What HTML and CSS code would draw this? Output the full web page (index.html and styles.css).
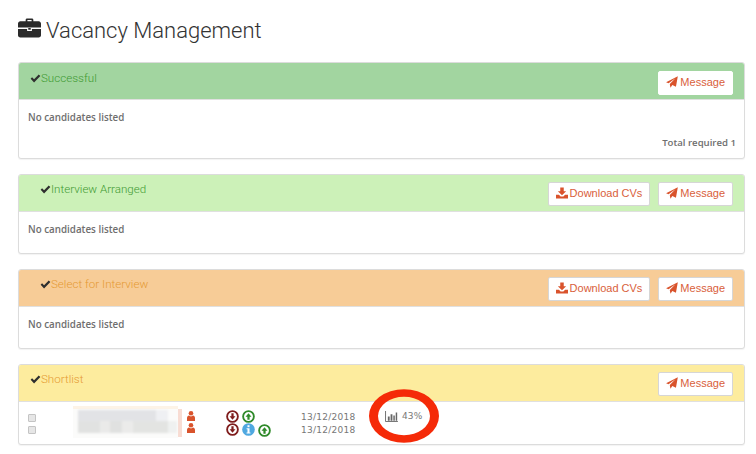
FILE: index.html
```html
<!DOCTYPE html>
<html lang="en">
<head>
<meta charset="utf-8">
<title>Vacancy Management</title>
<link rel="stylesheet" href="styles.css">
</head>
<body>
<svg class="defs" width="0" height="0" aria-hidden="true">
  <symbol id="check" viewBox="0 0 12 10"><path d="M0.6 5.2 2.2 3.6 4.4 5.8 9.6 0.6 11.4 2.2 4.4 9.4Z" fill="currentColor"/></symbol>
  <symbol id="plane" viewBox="0 0 14 14"><path d="M13.8 0.2 11.6 12.4 7.4 10.6 5.2 13.8 4.4 9.4 11 2.6 3 8.4 0.1 7.2Z" fill="currentColor"/></symbol>
  <symbol id="download" viewBox="0 0 13 12"><path d="M4.6 0H8.4V4H11L6.5 8.4 2 4H4.6ZM0 8H3.2L5 9.8H8L9.8 8H13V12H0Z" fill="currentColor"/></symbol>
  <symbol id="person" viewBox="0 0 8 10"><circle cx="4" cy="2.3" r="2.3" fill="currentColor"/><path d="M0 10V7C0 5.5 1 4.6 2 4.6L4 5.4 6 4.6C7 4.6 8 5.5 8 7V10Z" fill="currentColor"/></symbol>
  <symbol id="circle-down" viewBox="0 0 14 14"><circle cx="7" cy="7" r="5.8" fill="#fff" stroke="currentColor" stroke-width="2"/><path d="M5.8 3.4H8.2V6.8H10.2L7 10.6 3.8 6.8H5.8Z" fill="currentColor"/></symbol>
  <symbol id="circle-up" viewBox="0 0 14 14"><circle cx="7" cy="7" r="5.8" fill="#fff" stroke="currentColor" stroke-width="2"/><path d="M5.8 10.6H8.2V7.2H10.2L7 3.4 3.8 7.2H5.8Z" fill="currentColor"/></symbol>
  <symbol id="info" viewBox="0 0 14 14"><circle cx="7" cy="7" r="6.8" fill="currentColor"/><rect x="5.9" y="2.4" width="2.2" height="2.1" fill="#fff"/><path d="M4.9 5.6H8.1V10.2H9.1V11.4H4.9V10.2H5.9V6.8H4.9Z" fill="#fff"/></symbol>
  <symbol id="bars" viewBox="0 0 14 12"><path d="M0.5 0V11.5H14" fill="none" stroke="currentColor"/><path d="M3 6H5V10.5H3ZM6 3.5H8V10.5H6ZM9 5H10.6V10.5H9ZM11.6 1.5H13.2V10.5H11.6Z" fill="currentColor"/></symbol>
</svg>

<main class="page">
  <h1 class="title">
    <svg class="title-icon" viewBox="0 0 24 20" aria-hidden="true"><path d="M8 3V1.4C8 .6 8.6 0 9.4 0H14.6C15.4 0 16 .6 16 1.4V3H21.6C22.9 3 24 4.1 24 5.4V9.6H0V5.4C0 4.1 1.1 3 2.4 3ZM9.8 1.7V3H14.2V1.7ZM0 11H9.5V13H14.5V11H24V17.6C24 18.9 22.9 20 21.6 20H2.4C1.1 20 0 18.9 0 17.6ZM10.7 10H13.3V11.9H10.7Z" fill="currentColor"/></svg>
    Vacancy Management
  </h1>

  <section class="panel">
    <header class="panel-head head-green">
      <div class="head-label"><svg class="check"><use href="#check"/></svg><span class="label-green">Successful</span></div>
      <div class="actions">
        <a class="btn btn-flat"><svg class="btn-icon"><use href="#plane"/></svg>Message</a>
      </div>
    </header>
    <div class="panel-body body-total">
      <p class="empty">No candidates listed</p>
      <p class="total">Total required 1</p>
    </div>
  </section>

  <section class="panel">
    <header class="panel-head head-lime">
      <div class="head-label indent raised"><svg class="check"><use href="#check"/></svg><span class="label-green">Interview Arranged</span></div>
      <div class="actions">
        <a class="btn"><svg class="btn-icon"><use href="#download"/></svg>Download CVs</a>
        <a class="btn"><svg class="btn-icon"><use href="#plane"/></svg>Message</a>
      </div>
    </header>
    <div class="panel-body"><p class="empty">No candidates listed</p></div>
  </section>

  <section class="panel">
    <header class="panel-head head-orange">
      <div class="head-label indent raised"><svg class="check"><use href="#check"/></svg><span class="label-orange">Select for Interview</span></div>
      <div class="actions">
        <a class="btn"><svg class="btn-icon"><use href="#download"/></svg>Download CVs</a>
        <a class="btn"><svg class="btn-icon"><use href="#plane"/></svg>Message</a>
      </div>
    </header>
    <div class="panel-body"><p class="empty">No candidates listed</p></div>
  </section>

  <section class="panel">
    <header class="panel-head head-yellow">
      <div class="head-label raised"><svg class="check"><use href="#check"/></svg><span class="label-orange">Shortlist</span></div>
      <div class="actions">
        <a class="btn"><svg class="btn-icon"><use href="#plane"/></svg>Message</a>
      </div>
    </header>
    <div class="rows">
      <div class="col-checks"><span class="box"></span><span class="box"></span></div>
      <svg class="redacted" viewBox="0 0 110 32" aria-hidden="true">
        <defs><filter id="soft"><feGaussianBlur stdDeviation="0.8"/></filter></defs>
        <rect width="105" height="32" fill="#fbfbfa"/>
        <rect width="105" height="3" fill="#fdf3e6"/>
        <rect x="105" y="3" width="4" height="28" fill="#f8dcd3"/>
        <g filter="url(#soft)">
          <rect x="5" y="4" width="78" height="11" fill="#e2e3e6"/>
          <rect x="83" y="4" width="12" height="11" fill="#eff0f3"/>
          <rect x="5" y="15" width="22" height="12" fill="#e1e2e1"/>
          <rect x="27" y="15" width="10" height="12" fill="#eaeae9"/>
          <rect x="37" y="15" width="12" height="12" fill="#e0e1e0"/>
          <rect x="49" y="15" width="11" height="12" fill="#ebebea"/>
          <rect x="60" y="15" width="35" height="12" fill="#e3e4e2"/>
          <rect x="95" y="15" width="9" height="12" fill="#eff1f0"/>
        </g>
      </svg>
      <div class="col-people">
        <svg class="person"><use href="#person"/></svg>
        <svg class="person"><use href="#person"/></svg>
      </div>
      <div class="col-status">
        <div class="status-row">
          <svg class="status dark-red"><use href="#circle-down"/></svg>
          <svg class="status green"><use href="#circle-up"/></svg>
        </div>
        <div class="status-row">
          <svg class="status dark-red"><use href="#circle-down"/></svg>
          <svg class="status blue"><use href="#info"/></svg>
          <svg class="status green drop"><use href="#circle-up"/></svg>
        </div>
      </div>
      <div class="col-dates"><span>13/12/2018</span><span>13/12/2018</span></div>
      <div class="col-score"><svg class="bars"><use href="#bars"/></svg><span>43%</span></div>
    </div>
  </section>
</main>

<svg class="ring" viewBox="0 0 72 56" aria-hidden="true"><path fill-rule="evenodd" fill="#f52a08" d="M1 28a35 26.8 0 1 0 70 0a35 26.8 0 1 0 -70 0ZM10 28a26 19.2 0 1 0 52 0a26 19.2 0 1 0 -52 0Z"/></svg>
</body>
</html>
```

FILE: styles.css
```css
* { box-sizing: border-box; }
html, body { margin: 0; padding: 0; }
body {
  width: 756px;
  height: 454px;
  overflow: hidden;
  background: #fff;
  position: relative;
  font-family: "Open Sans", "Liberation Sans", sans-serif;
  color: #666;
}
.defs { position: absolute; }
.page { padding: 18px 11px 0 18px; }

.title {
  display: flex;
  align-items: center;
  gap: 5px;
  margin: 0 0 18px;
  height: 26px;
  padding-bottom: 2px;
  font-family: Roboto, "Liberation Sans", sans-serif;
  font-weight: 300;
  font-size: 22px;
  color: #333;
}
.title-icon { width: 23px; height: 20px; color: #2b2b2b; margin-bottom: 4px; }

.panel {
  border: 1px solid #dcdcdc;
  border-radius: 3px;
  margin-bottom: 15px;
  background: #fff;
  box-shadow: 0 1px 1px rgba(0,0,0,.05);
  overflow: hidden;
}
.panel-head {
  display: flex;
  justify-content: space-between;
  height: 37px;
  padding: 7px 11px 0 11px;
  border-bottom: 1px solid #e0e0e0;
}
.head-green { background: #a2d5a0; }
.head-lime { background: #ccf1b8; }
.head-orange { background: #f7cc97; }
.head-yellow { background: #fdec9e; }

.head-label {
  display: flex;
  align-items: flex-start;
  font-family: Roboto, "Liberation Sans", sans-serif;
  font-weight: 300;
  font-size: 11.6px;
  line-height: 16px;
  color: #2f2f2f;
}
.head-label.indent { padding-left: 10px; }
.head-label.raised { margin-top: -1px; }
.check { width: 11px; height: 9px; margin-top: 4px; color: #2f2f2f; }
.label-green { color: #3f9a32; }
.label-orange { color: #e59a33; }

.actions { display: flex; gap: 8px; align-items: flex-start; }
.btn {
  display: flex;
  align-items: center;
  gap: 2px;
  height: 24px;
  padding: 0 7px 2px;
  background: #fff;
  border: 1px solid #d6d6d6;
  border-radius: 2px;
  font-family: "Liberation Sans", sans-serif;
  font-size: 11px;
  color: #d9603b;
}
.btn-flat { border-color: #fff; margin-top: 1px; }
.btn-icon { width: 12px; height: 12px; color: #d9532c; }

.panel-body { padding: 11px 9px 0; height: 41px; }
.body-total { height: 58px; display: flex; flex-direction: column; }
.empty, .total {
  margin: 0;
  font-size: 9.8px;
  font-weight: 600;
  line-height: 14px;
  color: #6e6e6e;
}
.total { margin-top: 11px; text-align: right; margin-right: -1px; font-size: 9.6px; }

.rows { display: flex; align-items: flex-start; height: 42px; padding: 4px 0 0 9px; }
.col-checks { display: flex; flex-direction: column; gap: 4px; width: 45px; padding-top: 8px; }
.box {
  display: block;
  width: 8px;
  height: 8px;
  background: #e6e6e6;
  border: 1px solid #c4c4c4;
  border-radius: 1px;
}
.redacted { width: 110px; height: 32px; display: block; }
.col-people { display: flex; flex-direction: column; gap: 2px; width: 43px; padding: 5px 0 0 4px; }
.person { width: 8px; height: 10px; color: #d9532c; }
.col-status { width: 75px; padding-top: 4px; }
.status-row { display: flex; gap: 3px; height: 12.5px; }
.status { width: 13px; height: 13px; }
.dark-red { color: #7f1d1d; }
.green { color: #2f8a2a; }
.blue { color: #4fa8e0; }
.drop { margin-top: 1px; }
.col-dates {
  display: flex;
  flex-direction: column;
  width: 84px;
  padding-top: 5px;
  font-family: "DejaVu Sans", sans-serif;
  font-size: 9px;
  line-height: 13px;
  letter-spacing: 0.25px;
  color: #777;
}
.col-score {
  display: flex;
  align-items: center;
  gap: 4px;
  padding-top: 4px;
  font-family: "DejaVu Sans", sans-serif;
  font-size: 9px;
  line-height: 12px;
  letter-spacing: 0.1px;
  color: #777;
}
.bars { width: 13px; height: 11px; color: #666; }

.ring { position: absolute; left: 368px; top: 388px; width: 72px; height: 56px; }
```
